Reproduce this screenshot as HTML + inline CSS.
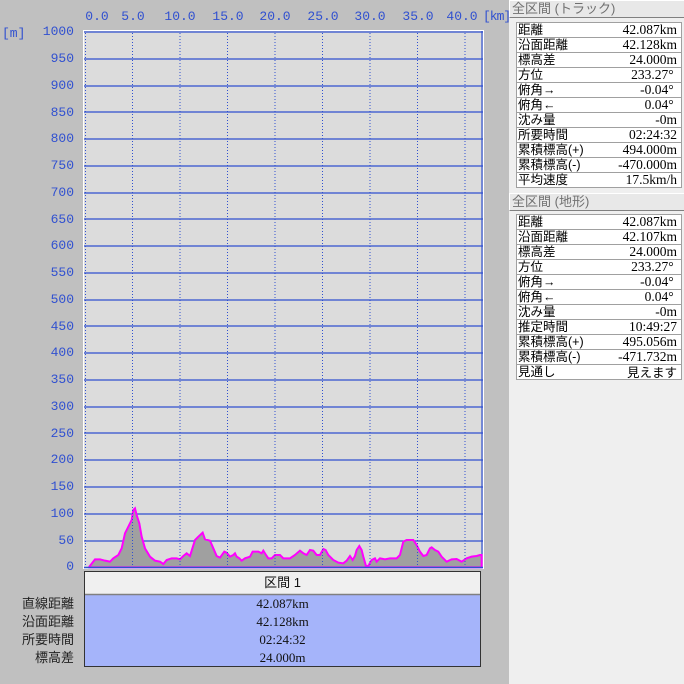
<!DOCTYPE html><html><head><meta charset="utf-8"><style>
body{margin:0;width:684px;height:684px;background:#c0c0c0;position:relative;overflow:hidden;font-family:"Liberation Sans","Noto Sans CJK JP",sans-serif;font-size:12px}
.a{position:absolute}
.yl{position:absolute;right:610px;color:#3050d0;font-size:13px;font-family:"Liberation Mono",monospace;line-height:14px}
.xl{position:absolute;top:10px;color:#3050d0;font-size:13px;font-family:"Liberation Mono",monospace;line-height:14px;transform:translateX(-50%)}
.hdr{position:absolute;left:509px;width:173px;height:16px;background:#e8e8e8;border:1px solid;border-color:#fff #808080 #808080 #fff;color:#707070;font-size:13px;line-height:16px;padding-left:2px}
.tb{position:absolute;left:516px;width:164px;background:#fff;border:1px solid #a0a0a0;border-bottom:none}
.tb div{height:14px;border-bottom:1px solid #a0a0a0;display:flex;justify-content:space-between;line-height:14px;font-size:12.5px;padding:0 4px 0 1px;color:#000}
.tb div span:last-child{font-family:"Liberation Serif","Noto Serif CJK SC",serif;font-size:13.5px}
.bl{position:absolute;right:610px;color:#222;font-size:13px;line-height:18px}
.bv{position:absolute;left:84px;width:397px;text-align:center;font-size:12px;line-height:18px;color:#111;font-family:"Liberation Serif",serif;font-size:13px}
</style></head><body>
<div class="a" style="left:509px;top:0;width:175px;height:684px;background:#efefef"></div>
<div class="hdr" style="top:0">全区間 (トラック)</div>
<div class="tb" style="top:22px">
<div><span>距離</span><span>42.087km</span></div>
<div><span>沿面距離</span><span>42.128km</span></div>
<div><span>標高差</span><span>24.000m</span></div>
<div><span>方位</span><span>233.27°&nbsp;</span></div>
<div><span>俯角→</span><span>-0.04°&nbsp;</span></div>
<div><span>俯角←</span><span>0.04°&nbsp;</span></div>
<div><span>沈み量</span><span>-0m</span></div>
<div><span>所要時間</span><span>02:24:32</span></div>
<div><span>累積標高(+)</span><span>494.000m</span></div>
<div><span>累積標高(-)</span><span>-470.000m</span></div>
<div><span>平均速度</span><span>17.5km/h</span></div>
</div>
<div class="hdr" style="top:193px">全区間 (地形)</div>
<div class="tb" style="top:214px">
<div><span>距離</span><span>42.087km</span></div>
<div><span>沿面距離</span><span>42.107km</span></div>
<div><span>標高差</span><span>24.000m</span></div>
<div><span>方位</span><span>233.27°&nbsp;</span></div>
<div><span>俯角→</span><span>-0.04°&nbsp;</span></div>
<div><span>俯角←</span><span>0.04°&nbsp;</span></div>
<div><span>沈み量</span><span>-0m</span></div>
<div><span>推定時間</span><span>10:49:27</span></div>
<div><span>累積標高(+)</span><span>495.056m</span></div>
<div><span>累積標高(-)</span><span>-471.732m</span></div>
<div><span>見通し</span><span style="font-family:'Noto Sans CJK JP',sans-serif;font-size:12.5px">見えます</span></div>
</div>

<div class="a" style="left:2px;top:26px;color:#3050d0;font-size:13px;font-family:'Liberation Mono',monospace">[m]</div>
<div class="xl" style="left:97px">0.0</div><div class="xl" style="left:133px">5.0</div><div class="xl" style="left:180px">10.0</div><div class="xl" style="left:228px">15.0</div><div class="xl" style="left:275px">20.0</div><div class="xl" style="left:323px">25.0</div><div class="xl" style="left:370px">30.0</div><div class="xl" style="left:418px">35.0</div><div class="xl" style="left:462px">40.0</div><div class="a" style="left:483px;top:10px;color:#3050d0;font-size:13px;font-family:'Liberation Mono',monospace;line-height:14px;letter-spacing:-1px">[km]</div>
<div class="yl" style="top:25px">1000</div><div class="yl" style="top:52px">950</div><div class="yl" style="top:79px">900</div><div class="yl" style="top:106px">850</div><div class="yl" style="top:132px">800</div><div class="yl" style="top:159px">750</div><div class="yl" style="top:186px">700</div><div class="yl" style="top:213px">650</div><div class="yl" style="top:239px">600</div><div class="yl" style="top:266px">550</div><div class="yl" style="top:293px">500</div><div class="yl" style="top:320px">450</div><div class="yl" style="top:346px">400</div><div class="yl" style="top:373px">350</div><div class="yl" style="top:400px">300</div><div class="yl" style="top:427px">250</div><div class="yl" style="top:453px">200</div><div class="yl" style="top:480px">150</div><div class="yl" style="top:507px">100</div><div class="yl" style="top:534px">50</div><div class="yl" style="top:560px">0</div>

<svg class="a" style="left:0;top:0" width="684" height="684">
<rect x="83" y="30" width="401" height="539" fill="#fff"/>
<rect x="84" y="31" width="399" height="537" fill="#dcdcdc"/>
<g stroke="#3050d0" stroke-width="1.2">
<line x1="84" y1="32" x2="483" y2="32"/><line x1="84" y1="59" x2="483" y2="59"/><line x1="84" y1="86" x2="483" y2="86"/><line x1="84" y1="112" x2="483" y2="112"/><line x1="84" y1="139" x2="483" y2="139"/><line x1="84" y1="166" x2="483" y2="166"/><line x1="84" y1="193" x2="483" y2="193"/><line x1="84" y1="219" x2="483" y2="219"/><line x1="84" y1="246" x2="483" y2="246"/><line x1="84" y1="273" x2="483" y2="273"/><line x1="84" y1="300" x2="483" y2="300"/><line x1="84" y1="326" x2="483" y2="326"/><line x1="84" y1="353" x2="483" y2="353"/><line x1="84" y1="380" x2="483" y2="380"/><line x1="84" y1="407" x2="483" y2="407"/><line x1="84" y1="433" x2="483" y2="433"/><line x1="84" y1="460" x2="483" y2="460"/><line x1="84" y1="487" x2="483" y2="487"/><line x1="84" y1="514" x2="483" y2="514"/><line x1="84" y1="541" x2="483" y2="541"/>
<line x1="482" y1="31" x2="482" y2="568"/>
</g>
<g transform="translate(80,490) scale(0.3333)">
<path d="M28,232 L28,230 L45,208 L60,208 L75,212 L90,215 L100,205 L115,195 L125,175 L135,130 L145,110 L155,90 L160,60 L165,55 L170,75 L178,100 L185,140 L195,175 L210,200 L225,212 L240,215 L250,222 L260,210 L275,205 L290,205 L300,208 L310,198 L320,190 L330,198 L345,150 L355,140 L368,128 L375,148 L390,152 L400,175 L410,198 L420,203 L433,185 L440,188 L450,200 L460,195 L465,190 L470,200 L478,205 L485,212 L495,205 L510,200 L518,185 L535,185 L545,190 L550,182 L558,195 L565,205 L575,205 L585,195 L600,195 L610,205 L630,205 L645,195 L660,182 L670,190 L680,195 L690,180 L700,182 L710,195 L720,195 L730,177 L737,180 L745,195 L760,210 L775,218 L790,220 L800,212 L810,198 L818,210 L825,198 L830,180 L838,168 L845,180 L850,200 L858,228 L865,228 L875,210 L885,205 L890,215 L900,205 L915,208 L930,205 L950,205 L960,195 L970,155 L980,150 L1000,150 L1010,165 L1020,185 L1030,198 L1040,195 L1050,175 L1055,172 L1065,180 L1075,185 L1085,200 L1100,215 L1115,208 L1130,207 L1145,215 L1160,205 L1175,200 L1190,198 L1200,195 L1205,195 L1205,232 Z" fill="#a0a0a0" stroke="#ff00ff" stroke-width="6"/>
</g>
<g stroke="#3050d0" stroke-width="1" stroke-dasharray="1,2">
<line x1="85.5" y1="33" x2="85.5" y2="567"/><line x1="132.5" y1="33" x2="132.5" y2="567"/><line x1="180" y1="33" x2="180" y2="567"/><line x1="227.5" y1="33" x2="227.5" y2="567"/><line x1="275" y1="33" x2="275" y2="567"/><line x1="322.5" y1="33" x2="322.5" y2="567"/><line x1="370" y1="33" x2="370" y2="567"/><line x1="417.5" y1="33" x2="417.5" y2="567"/><line x1="465" y1="33" x2="465" y2="567"/>
</g>
<line x1="84" y1="567.5" x2="483" y2="567.5" stroke="#3050d0" stroke-width="1.5"/>
<rect x="84.5" y="571.5" width="396" height="95" fill="#a5b4fa" stroke="#333" stroke-width="1"/>
<rect x="85" y="572" width="395" height="22" fill="#f0f0f0"/>
<line x1="85" y1="594.5" x2="480" y2="594.5" stroke="#808080" stroke-width="1.5"/>
</svg>
<div class="a" style="left:84px;top:574px;width:397px;text-align:center;font-size:13px;line-height:18px;color:#111">区間 1</div>
<div class="bl" style="top:595px">直線距離</div><div class="bl" style="top:613px">沿面距離</div><div class="bl" style="top:631px">所要時間</div><div class="bl" style="top:649px">標高差</div>
<div class="bv" style="top:595px">42.087km</div><div class="bv" style="top:613px">42.128km</div><div class="bv" style="top:631px">02:24:32</div><div class="bv" style="top:649px">24.000m</div>
</body></html>
